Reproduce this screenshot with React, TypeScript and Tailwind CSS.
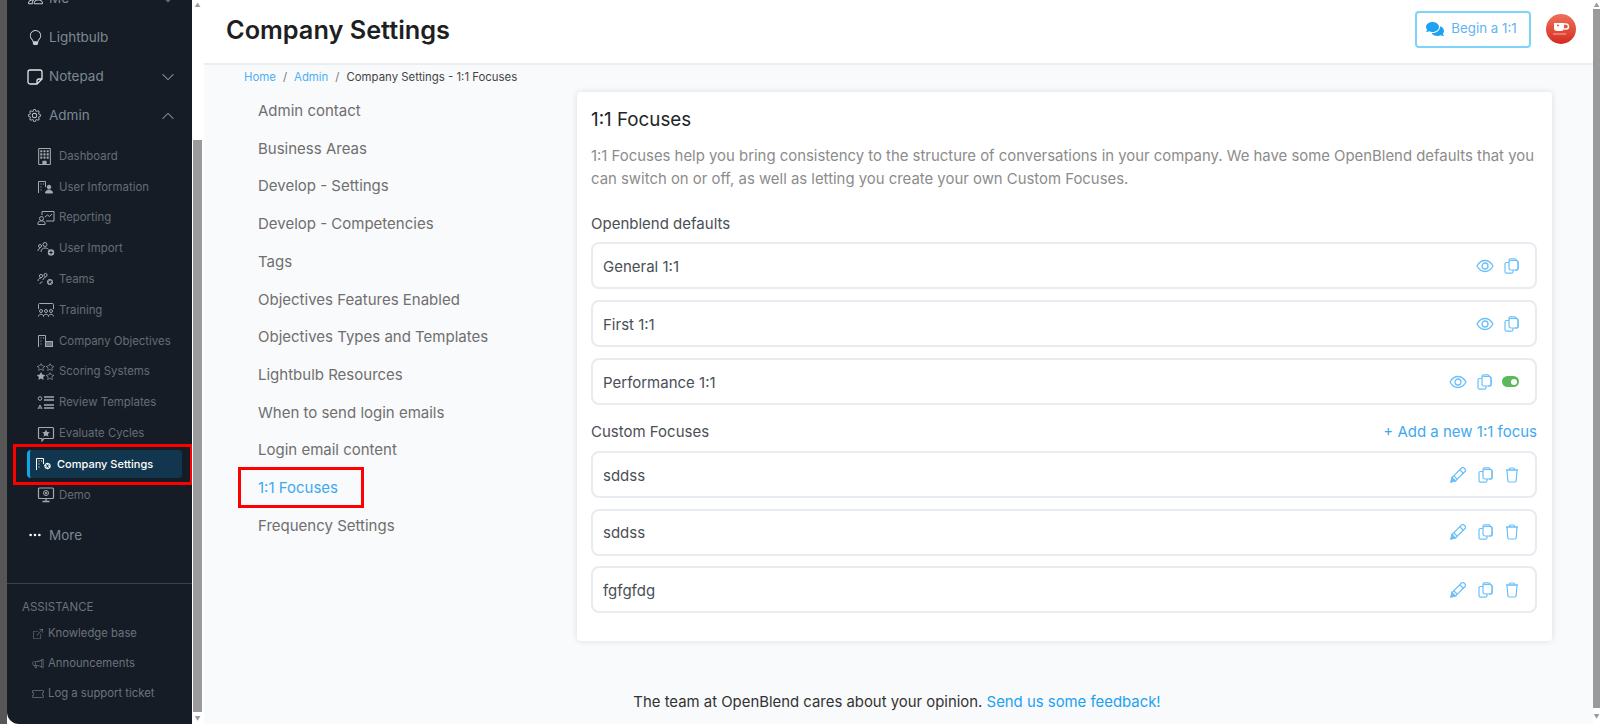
import { BsBoxArrowUpRight, BsBuilding, BsChevronDown, BsChevronUp, BsGear, BsLightbulb, BsMegaphone, BsPeople, BsStar, BsStarFill, BsThreeDots, BsTicket } from "react-icons/bs";
import { FaComments } from "react-icons/fa";

const ScoringIcon = () => (
    <span className="grid grid-cols-2 gap-px text-[8px]">
        <BsStar />
        <BsStar />
        <BsStarFill />
        <BsStar />
    </span>
);

// small sidebar drawings, all on the same 18x16 box
const SideIcon = ({ children }: { children: React.ReactNode }) => (
    <svg width="18" height="16" viewBox="0 0 18 16" fill="none" stroke="currentColor" strokeWidth="1">
        {children}
    </svg>
);

const BuildingBase = () => (
    <>
        <path d="M1.5 14V2.5h7V8" />
        <path d="M3.5 5h1M6 5h1M3.5 8h1M3.5 11h1" />
    </>
);

const subItems = [
    { label: "Dashboard", icon: <BsBuilding className="text-[17px] -ml-[1px]" /> },
    {
        label: "User Information",
        icon: (
            <SideIcon>
                <BuildingBase />
                <circle cx="12" cy="8" r="1.8" fill="currentColor" />
                <path d="M8.5 14c0-4 7-4 7 0z" fill="currentColor" />
            </SideIcon>
        ),
    },
    {
        label: "Reporting",
        icon: (
            <SideIcon>
                <path d="M5 5V1.5h12V11H9" />
                <path d="M8 7l2.5-2 2 1.5L15 4" />
                <circle cx="4.5" cy="8.5" r="2" />
                <path d="M1 14.5v-1.5c0-1.5 1.5-2 3.5-2s3.5.5 3.5 2v1.5z" />
            </SideIcon>
        ),
    },
    {
        label: "User Import",
        icon: (
            <SideIcon>
                <circle cx="8" cy="3.5" r="2" />
                <circle cx="3" cy="5" r="1.5" />
                <path d="M4 11c0-3 2-4 4-4s3 .5 3.5 1.5M1 10c0-1.500 .5-2.500 2-2.500" />
                <circle cx="14" cy="11.5" r="3.2" fill="currentColor" stroke="none" />
                <path d="M14 9.8v3.4M12.3 11.5h3.4" stroke="#151c26" />
            </SideIcon>
        ),
    },
    {
        label: "Teams",
        icon: (
            <SideIcon>
                <circle cx="4" cy="4" r="1.6" />
                <circle cx="8.5" cy="3" r="1.6" />
                <path d="M1 9c0-2 1.5-3 3-3M6 8c0-1.5 1-2.5 2.5-2.5M3 12c0-1.5 1-2 2.5-2" />
                <circle cx="13" cy="10" r="2" strokeWidth="1.8" strokeDasharray="1.2 .6" />
                <circle cx="13" cy="10" r="2.6" strokeWidth=".8" />
            </SideIcon>
        ),
    },
    {
        label: "Training",
        icon: (
            <SideIcon>
                <path d="M1.5 7V2.5a1 1 0 0 1 1-1h13a1 1 0 0 1 1 1V7" />
                <circle cx="4" cy="9" r="1.5" />
                <circle cx="9" cy="9" r="1.5" />
                <circle cx="14" cy="9" r="1.5" />
                <path d="M1.5 14.5c0-3 5-3 5 0M6.5 14.5c0-3 5-3 5 0M11.5 14.5c0-3 5-3 5 0" />
            </SideIcon>
        ),
    },
    {
        label: "Company Objectives",
        icon: (
            <SideIcon>
                <BuildingBase />
                <path d="M8 8h8v6H8z" fill="currentColor" stroke="none" />
                <path d="M9 10h6M9 12h6" stroke="#151c26" strokeWidth=".8" />
            </SideIcon>
        ),
    },
    { label: "Scoring Systems", icon: <ScoringIcon /> },
    {
        label: "Review Templates",
        icon: (
            <SideIcon>
                <circle cx="3" cy="3.5" r="1.8" />
                <path d="M7 2h10M7 5h10M7 10h10M7 13h10" strokeWidth="1.3" />
                <path d="M1 14l2-4 2 4M2 13h2" />
            </SideIcon>
        ),
    },
    {
        label: "Evaluate Cycles",
        icon: (
            <SideIcon>
                <path d="M2.5 1.5h13a1 1 0 0 1 1 1v9a1 1 0 0 1-1 1H7l-2 2.5v-2.5H2.5a1 1 0 0 1-1-1v-9a1 1 0 0 1 1-1z" strokeWidth="1.2" />
                <path d="M9 3.5l1.2 2.4 2.6.3-1.9 1.8.5 2.6L9 9.4 6.600 10.600l.5-2.600-1.900-1.800 2.600-.3z" fill="currentColor" stroke="none" />
            </SideIcon>
        ),
    },
];

const settingsLinks = [
    "Admin contact",
    "Business Areas",
    "Develop - Settings",
    "Develop - Competencies",
    "Tags",
    "Objectives Features Enabled",
    "Objectives Types and Templates",
    "Lightbulb Resources",
    "When to send login emails",
    "Login email content",
    "1:1 Focuses",
    "Frequency Settings",
];

const MainItem = ({ icon, label, chevron }: { icon: JSX.Element; label: string; chevron?: "up" | "down" }) => (
    <div className="h-[39px] flex items-center pl-[21px] pr-[17px] text-[#7d8894]">
        <span className="w-[21px] shrink-0 flex text-[#c9ccd0]">{icon}</span>
        <span className="flex-grow text-[13.5px]">{label}</span>
        {chevron === "down" && <BsChevronDown className="text-[14px] text-[#8b939b]" />}
        {chevron === "up" && <BsChevronUp className="text-[14px] text-[#8b939b]" />}
    </div>
);

const SubItem = ({ icon, label }: { icon: JSX.Element; label: string }) => (
    <div className="h-[30.8px] flex items-center pl-[30px] text-[11.4px] text-[#666d75]">
        <span className="w-[22px] shrink-0 flex text-[#a5a9ae]">{icon}</span>
        <span>{label}</span>
    </div>
);

const Sidebar = () => (
    <aside className="w-[185px] h-[724px] shrink-0 bg-[#151c26] rounded-bl-xl overflow-hidden flex flex-col">
        <div className="flex flex-col -mt-[3px]">
            <div className="-mt-[18px]">
                <MainItem icon={<BsPeople className="text-[15px]" />} label="Me" chevron="down" />
            </div>
            <MainItem icon={<BsLightbulb className="text-[15px]" />} label="Lightbulb" />
            <MainItem
                icon={
                    <svg width="16" height="16" viewBox="0 0 16 16" fill="none" stroke="#e4e6e8" strokeWidth="1.3" className="-ml-[1px]">
                        <path d="M3 1h10a2 2 0 0 1 2 2v7l-5 5H3a2 2 0 0 1-2-2V3a2 2 0 0 1 2-2z" />
                        <path d="M15 10h-3a2 2 0 0 0-2 2v3" />
                    </svg>
                }
                label="Notepad"
                chevron="down"
            />
            <MainItem icon={<BsGear className="text-[13px]" />} label="Admin" chevron="up" />
        </div>
        <div className="flex flex-col mt-[6px]">
            {subItems.map(item => (
                <SubItem key={item.label} icon={item.icon} label={item.label} />
            ))}
            <div className="relative h-[31px] flex items-center">
                <div className="ml-[20px] w-[155px] shrink-0 h-[28px] bg-[#12364d] rounded border-l-[3px] border-[#0ea5e9] flex items-center pl-[5px] text-[11px] font-medium text-white">
                    <span className="w-[22px] flex">
                        <SideIcon>
                            <BuildingBase />
                            <circle cx="12.500" cy="10" r="2" strokeWidth="2" strokeDasharray="1.300 .6" />
                            <circle cx="12.500" cy="10" r="2.800" strokeWidth=".8" />
                        </SideIcon>
                    </span>
                    Company Settings
                </div>
                <div className="absolute left-[6px] top-[-5px] w-[180px] h-[41px] border-[3px] border-[#ff0000]" />
            </div>
            <SubItem
                icon={
                    <SideIcon>
                        <rect x="1.500" y="1" width="15" height="10.500" rx="1" strokeWidth="1.200" />
                        <circle cx="9" cy="6" r="2.500" />
                        <circle cx="9" cy="6" r=".8" fill="currentColor" />
                        <path d="M9 11.500v2.500M5.500 14.500h7" strokeWidth="1.300" />
                    </SideIcon>
                }
                label="Demo"
            />
        </div>
        <div className="mt-[5px]">
            <MainItem icon={<BsThreeDots className="text-[14px] text-white" />} label="More" />
        </div>
        <div className="mt-[28px] border-t border-[#3a424c] pt-[15px] pl-[15px]">
            <div className="text-[11.5px] leading-4 text-[#6b737c]">ASSISTANCE</div>
            <div className="mt-[4px] flex flex-col text-[11.3px] text-[#6b737c]">
                <div className="h-[30px] flex items-center pl-[7px]">
                    <BsBoxArrowUpRight className="w-[18px] text-[10px] text-[#6b737c]" />
                    <span className="ml-[1px]">Knowledge base</span>
                </div>
                <div className="h-[30px] flex items-center pl-[7px]">
                    <BsMegaphone className="w-[18px] text-[11px] text-[#6b737c]" />
                    <span className="ml-[1px]">Announcements</span>
                </div>
                <div className="h-[30px] flex items-center pl-[7px]">
                    <BsTicket className="w-[18px] text-[12px] text-[#6b737c]" />
                    <span className="ml-[1px]">Log a support ticket</span>
                </div>
            </div>
        </div>
    </aside>
);

const LeftScrollbar = () => (
    <div className="w-[12px] h-[724px] shrink-0 flex flex-col items-center bg-white pl-[1px] pr-[2px]">
        <div className="h-[9px] flex items-center justify-center text-[6px] text-[#9a9a9c]">▲</div>
        <div className="h-[131px]" />
        <div className="w-full flex-grow bg-[#9a9a9c]" />
        <div className="h-[12px] flex items-center justify-center text-[6px] text-[#9a9a9c]">▼</div>
    </div>
);

const RightScrollbar = () => (
    <div className="w-[7px] h-[724px] shrink-0 flex flex-col items-center bg-white">
        <div className="h-[9px] flex items-center justify-center text-[6px] text-[#9a9a9c]">▲</div>
        <div className="w-full flex-grow bg-[#9a9a9c]" />
        <div className="h-[16px] flex items-center justify-center text-[6px] text-[#9a9a9c]">▼</div>
    </div>
);

const EyeIcon = () => (
    <svg width="18" height="14" viewBox="0 0 18 14" fill="none" stroke="currentColor" strokeWidth="1.300">
        <path d="M1 7c2-3.600 4.800-5.500 8-5.500s6 1.900 8 5.500c-2 3.600-4.800 5.500-8 5.500S3 10.600 1 7z" />
        <circle cx="9" cy="7" r="3" />
    </svg>
);

const CopyIcon = () => (
    <svg width="15" height="16" viewBox="0 0 15 16" fill="none" stroke="currentColor" strokeWidth="1.200">
        <path d="M5 3.500V2.200A1.500 1.500 0 0 1 6.500.8H11l3.200 3.200v6.500a1.500 1.500 0 0 1-1.500 1.500H11" />
        <rect x="5" y="2.500" width="9" height="9.500" rx="2" />
        <path d="M5 4.500H2.500A1.500 1.500 0 0 0 1 6v7.700a1.500 1.500 0 0 0 1.500 1.500h5A1.500 1.500 0 0 0 9 13.700V12" />
    </svg>
);

const PencilIcon = () => (
    <svg width="16" height="16" viewBox="0 0 16 16" fill="none" stroke="currentColor" strokeWidth="1.200">
        <path d="M1 15l1-4.500L11.500 1a1.800 1.800 0 0 1 2.500 0l1 1a1.800 1.800 0 0 1 0 2.500L5.500 14z" />
        <path d="M10 3l3.500 3.500M4 9l3 3" />
        <path d="M1 15l1-4.500L5.500 14z" fill="currentColor" />
    </svg>
);

const TrashIcon = () => (
    <svg width="14" height="16" viewBox="0 0 14 16" fill="none" stroke="currentColor" strokeWidth="1.200">
        <path d="M1 3h12" strokeWidth="1.500" />
        <path d="M4.500 3V2a1 1 0 0 1 1-1h3a1 1 0 0 1 1 1v1" />
        <path d="M2 3l.8 10.500a1.500 1.500 0 0 0 1.500 1.500h5.400a1.500 1.500 0 0 0 1.500-1.500L12 3" />
    </svg>
);

const ActionIcons = ({ kind }: { kind: "view" | "viewToggle" | "edit" }) => (
    <div className={`flex items-center text-[#6cc0f8] ${kind === "edit" ? "gap-[12px]" : "gap-[10px]"}`}>
        {kind === "edit" ? <PencilIcon /> : <EyeIcon />}
        <CopyIcon />
        {kind === "edit" && <TrashIcon />}
        {kind === "viewToggle" && (
            <div className="w-[17px] h-[11px] rounded-full bg-[#5cb85c] flex items-center justify-end pr-[2px]">
                <div className="w-[6px] h-[6px] rounded-full bg-white" />
            </div>
        )}
    </div>
);

const FocusRow = ({ label, kind }: { label: string; kind: "view" | "viewToggle" | "edit" }) => (
    <div className="h-[47px] flex items-center justify-between border-2 border-[#e8ebef] rounded-lg pl-[10px] pr-[16px] text-[15px] text-[#4a4f55]">
        <span className="mt-[3px]">{label}</span>
        <ActionIcons kind={kind} />
    </div>
);

const App = () => {
    return (
        <div className="w-[1600px] h-[724px] flex overflow-hidden bg-white font-['Inter',sans-serif]">
            <div className="w-[7px] h-[724px] shrink-0 bg-[#565656]" />
            <Sidebar />
            <LeftScrollbar />
            <div className="flex-grow flex flex-col min-w-0 bg-[#f9fafc]">
                <header className="h-[65px] shrink-0 bg-white border-b-2 border-[#ebedf0] flex items-center justify-between pl-[22px] pr-[17px]">
                    <h1 className="text-[25.3px] font-semibold text-[#1d1f23] -mt-[4px]">Company Settings</h1>
                    <div className="flex items-center gap-[15px] -mt-[5px]">
                        <button className="w-[116px] h-[37px] border-2 border-[#7dd3f8] rounded flex items-center justify-center gap-[7px] pr-[3px] text-[13.3px] text-[#5fb4f3]">
                            <FaComments className="text-[18px] text-[#1da1f2]" />
                            Begin a 1:1
                        </button>
                        <div className="w-[30px] h-[30px] rounded-full bg-gradient-to-b from-[#ef7059] to-[#d4261f] flex items-center justify-center">
                            <svg width="18" height="14" viewBox="0 0 18 14">
                                <path d="M2 1h10v5a3 3 0 0 1-3 3H5a3 3 0 0 1-3-3z" fill="#fff" />
                                <path d="M12 2h2a2 2 0 0 1 0 5h-2" fill="none" stroke="#fff" strokeWidth="1.5" />
                                <path d="M1 12h13" stroke="#f4b0a4" strokeWidth="1" />
                                <circle cx="6" cy="3.5" r="1" fill="#e05040" />
                            </svg>
                        </div>
                    </div>
                </header>
                <div className="flex-grow min-h-0 flex flex-col pr-[3px]">
                    <nav className="pl-[40px] pt-[4px] h-[27px] text-[11.4px] leading-4 flex gap-[7px]">
                        <span className="text-[#4fb0f2]">Home</span>
                        <span className="text-[#777]">/</span>
                        <span className="text-[#4fb0f2]">Admin</span>
                        <span className="text-[#777]">/</span>
                        <span className="text-[#444]">Company Settings - 1:1 Focuses</span>
                    </nav>
                    <div className="flex">
                        <ul className="w-[373px] shrink-0 pl-[54px] pt-[0.5px] flex flex-col">
                            {settingsLinks.map(link => (
                                <li
                                    key={link}
                                    className={`relative h-[37.7px] flex items-center text-[15px] ${
                                        link === "1:1 Focuses" ? "text-[#3fa9f0]" : "text-[#6f6f6f]"
                                    }`}
                                >
                                    {link}
                                    {link === "1:1 Focuses" && (
                                        <div className="absolute left-[-20px] top-[-2px] w-[126px] h-[41px] border-[3px] border-[#ff0000]" />
                                    )}
                                </li>
                            ))}
                        </ul>
                        <section className="w-[975px] h-[549px] bg-white rounded shadow-[0_0_6px_rgba(0,0,0,0.12)] pl-[14px] pr-[15px] pt-[16px]">
                            <h2 className="text-[18.8px] leading-6 font-normal text-[#212529]">1:1 Focuses</h2>
                            <p className="mt-[13px] text-[14.9px] leading-[22.5px] text-[#8c8c8c]">
                                1:1 Focuses help you bring consistency to the structure of conversations in your company. We have some OpenBlend defaults that you can switch on or off, as well as letting you create your own Custom Focuses.
                            </p>
                            <div className="mt-[23px] mb-[8px] text-[15px] leading-[21px] text-[#4a4f55]">Openblend defaults</div>
                            <div className="flex flex-col gap-[11px]">
                                <FocusRow label="General 1:1" kind="view" />
                                <FocusRow label="First 1:1" kind="view" />
                                <FocusRow label="Performance 1:1" kind="viewToggle" />
                            </div>
                            <div className="mt-[16px] mb-[9px] flex justify-between text-[15px] leading-[21px]">
                                <span className="text-[#4a4f55]">Custom Focuses</span>
                                <span className="text-[#3fa9f0]">+ Add a new 1:1 focus</span>
                            </div>
                            <div className="flex flex-col gap-[10.5px]">
                                <FocusRow label="sddss" kind="edit" />
                                <FocusRow label="sddss" kind="edit" />
                                <FocusRow label="fgfgfdg" kind="edit" />
                            </div>
                        </section>
                    </div>
                    <div className="mt-[50px] text-center text-[14.9px] text-[#333]">
                        The team at OpenBlend cares about your opinion. <span className="text-[#1da1f2]">Send us some feedback!</span>
                    </div>
                </div>
            </div>
            <RightScrollbar />
        </div>
    );
};

export default App;
